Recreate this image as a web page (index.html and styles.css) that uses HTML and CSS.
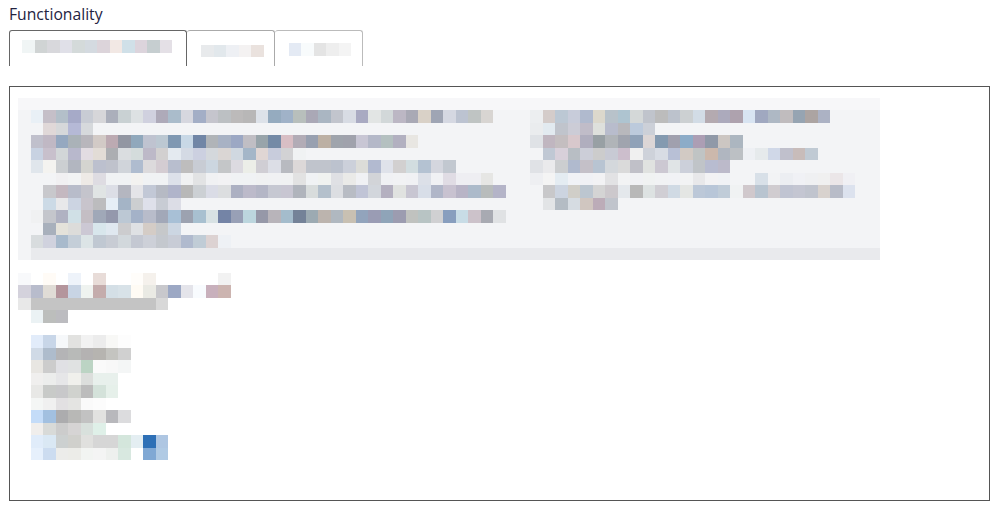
FILE: index.html
```html
<!DOCTYPE html>
<html lang="en">
<head>
<meta charset="utf-8">
<title>Functionality</title>
<link rel="stylesheet" href="styles.css">
</head>
<body>
<main class="page">
  <div class="field-label">Functionality</div>
  <nav class="tabs">
    <div class="tab tab-active"><div class="mosaic" data-m="tab1"></div></div>
    <div class="tab tab-second"><div class="mosaic" data-m="tab2"></div></div>
    <div class="tab tab-third"><div class="mosaic" data-m="tab3"></div></div>
  </nav>
  <section class="box">
    <div class="panel">
      <div class="panel-body">
        <div class="mosaic panel-left" data-m="left"></div>
        <div class="mosaic" data-m="right"></div>
      </div>
      <div class="panel-foot"></div>
    </div>
    <div class="mosaic lower" data-m="lower"></div>
  </section>
</main>
<script src="script.js"></script>
</body>
</html>
```
FILE: styles.css
```css
* { box-sizing: border-box; }
html, body { margin: 0; background: #fff; }
.page {
  width: 998px;
  height: 507px;
  padding-left: 9px;
  overflow: hidden;
  font-family: "Open Sans", "Noto Sans", sans-serif;
}
.field-label {
  height: 30px;
  padding-top: 3px;
  font-size: 15.7px;
  line-height: 22px;
  color: #23233f;
}
.tabs { display: flex; height: 36px; }
.tab {
  height: 36px;
  border: 1px solid #666;
  border-bottom: 0;
  border-radius: 3px 3px 0 0;
}
.tab-active { width: 178px; padding: 9px 0 0 12px; border-color: #666; }
.tab-second { width: 87.5px; padding: 13.5px 0 0 14px; border-color: #aaa; border-left: 0; }
.tab-third { width: 88px; padding: 12px 0 0 14px; border-color: #bbb; border-left: 0; }
.box {
  width: 981px;
  height: 415px;
  margin-top: 20px;
  padding: 11px 8px 0;
  border: 1px solid #555;
}
.panel { width: 862px; height: 162px; background: #f3f4f6; }
.panel-body { display: flex; height: 149.5px; padding: 12px 0 0 12.5px; background: linear-gradient(#f7f7f9 12px, #f3f4f6 12px); }
.panel-left { width: 499.5px; }
.panel-foot { height: 12.5px; margin-left: 12.5px; background: #e9eaed; }
.lower { margin-top: 12.5px; }
.mosaic { filter: blur(0.35px); }
.row { display: flex; height: 12.5px; }
.cell { flex: none; width: 12.5px; height: 12.5px; }
```
FILE: script.js
```js
const DATA = {
  tab1: ["f0f5f5 d0d4d4 d8d8dc e0e0e8 d4dada d4dae0 dcd4da f2e8e4 d0e0e8 dcd4dc c6ced0 e4e0e6"],
  tab2: ["e8eaec e2e8ec eef0f4 f4f2f2 eae2de"],
  tab3: ["e4eaf4 f8fbfc e4e4e4 eeeeee f4f4f4"],
  left: [
    "e9f0f6 c5bfc8 b3bfc9 a6aac8 c8ccd4 d6d6d9 abafbb c9d1d3 dde1e3 d0d1df aeaab9 aabccb d6d7df a3aec6 c5c5cd bcc0c3 bcbaba b8b7b7 dde2e9 95abbf a0b2c8 b8bfbc aaa8b6 aab6c2 c2c5cd d8dce4 a9aac2 e2e5e4 d2d8d9 bcb7c4 a9a9b5 d9d1c7 9fa5b4 d5d8e2 bcc3d1 bfc4c3 d8d5d2",
    "- e0d8d8 d6d8da b5b9d6 d6d9dc",
    "c0c0cc c0b8c4 95a8c0 aab2b8 b8b6bc d2cac6 bcaab2 9296a2 90a8bc bfc3d0 bcc8d2 7f98b2 c8d8e6 7186a6 b0b4b8 a8b2c4 9ca8c4 c0bec4 98a4aa 748aa6 d8bec4 b2acb6 98a0b0 bcb0a4 9fa4ac a0a2ac c8c6d4 b4b8c8 b4c0c0 b2b0c0 e8e6e2",
    "c8d2e2 c8c0cc d2d6d8 b8b8cc e2dce2 e2dcd6 acaeb2 dadde0 d4dcdc bdb9c8 d2d0d0 e4eaf0 d4dae4 ccd0e0 d4d8dc dad6d4 d0d8e0 a4b6c8 e0d6d4 c8ccdc d2d2d4 f0f2f3",
    "e0e6ec f4f3f0 cccfd2 b2b6c0 d4d4d0 bcc0ce bfc2cc d0d4da afbccf dcdadc d4ccd2 b8bece bebdbd c8ccd4 ccd6e0 c4c6c8 dcdae0 eceee8 d0ced4 dcdee6 b8bac0 dcd8d8 c0c4cc c0c4cc bcc2ce ccd0da dcdcd8 b2bad0 dfe2ea d2d0d0 d2dde0 b4c2d2 d4d6de c2c8d0",
    "- - f1f0f2 f2f3f4 eeeae6 dedce2 f0f2f4 f0f2f4 f3f2f0 f0f2f4 f0f2f4 dde1ea f0f1f2 e2e3e4 f0f1f3 f2f2f4 f0f2f4 f0f2f4 f0f1f2 f0f1f3 f0f1f2 e2e2e2 f0f2f4 f0f2f0 dfe0e4 eaeae8 f0f1f4 d2d4d8 f0f1f4 f1f2f4 f0f1f4 dce0e8 f0f1f4 e0dce4 eeeef2 eeeef2 e6e6e4",
    "- c8c8cc c4b8c0 b8bcca c4c4cc e0e4e4 dcdee6 b4b6c0 e4e4e8 c2c8d6 b6bac4 b0b4ca b8b8b8 ccd0d4 dadce6 dcdee0 acb0c2 bcbaca b4b6c6 c6c8d2 c8c6d2 b0b4bc d8dcdc b4c0cc dcdee2 b8bcc4 c0c4d6 d2d6dc b4b0c0 e0e2e0 c8c6d2 d8dee8 b0b6c8 c8c2d0 b8b4c6 acbaca b8bcbc b4b4c8",
    "- ccdae6 e8e8ea ccd4e2 c8c4cc bcbcbe e6eef6 a4b4c6 ccced0 dee0ea c8ccd4 dcdde6",
    "f0f1f2 c4c6cc b0b2c2 d0e0e6 c4bec4 a0a8b8 9498ac bcc8d4 a4b2c8 b8bcca a2a8b8 a8c0d6 9ca2b0 a8c0d0 d8e2e4 7484a6 98a0b6 bcd6de 9698a8 b8b4ba a4bccc 748298 9caab2 bcb4ae b0b8c0 c8c0b2 92a4bc 9a9cb4 8fa4b8 9c9cb0 c0c2bf b8c4c4 d0d0d2 889ebe c8dce6 ccc2ca a8aab2 e0e2e4",
    "- a8b0bc e4e2da dcdcda ccc8d4 d8e6ec e0e8f0 ccccce dfe1e4 d4ccc6 c6c8ca ccd6e2",
    "d8dcde d0d2de a8bacc c4ced8 dce4e6 c0c8d2 c8ccd4 d2d8dc c4c8d2 cdd0d8 c4c8ce c8ccd6 b0bace c0ccd6 dcd2d2 eef1f5"
  ],
  right: [
    "eceef0 d4ccca bcc8d4 c8ccda b0bace dcd8cc b8c2ca aec4d0 d4d8d8 c0c4cc bcbcbc bcc2cc ccd0d2 d2dce6 b4aab0 acaabc aea2ae d8e4f2 a0a8c0 aeb8c4 c0bcbe 96a4b2 aca4a2 acb2c4",
    "eaecee e2eaf0 c0c4cc ccccd6 c0bcc8 dee0dc b8bccc b8b8bc bccadc ccd0d8",
    "dfe2e6 c0b6c0 c4bec0 d8c8cc b0aebe 98a0a4 b0b4b8 a0a4ae 90a2b8 dcd6d6 849ab0 a0a0ae 8cacc8 ac9eb4 9099a8 ccc6c2 acb6c0",
    "- c0c8d4 d8d0da b8bec4 ccced8 cccccc c8cad4 ccbecc f0f0f0 ced2da d8dce4 b8c0d6 d2cac4 c0c4c4 ccb8ac b0b6c0 bcc0c4 eef0f4 e6eaec d0d8e8 c0c0cc c8bcba c0cad4",
    "e0e2e6 eaeaec ccced0 b0bace c4c0c8 b8c4d2 d4d8dc dadada c0c0c8 e0e2e0 ccc8d2 e0e4e6 ccd0da c0c4c8 b8bcd0 bcbaca",
    "eeeff2 f4f4f4 e4ecf2 f0f2f6 f0f1f5 f2f2f4 e2e2e4 f2f3f4 f0f1f4 f0f2f2 f1f2f4 f1f2f5 f2f3f4 e8e8ea f2f2f4 f0f2f5 - - d8e0e8 f2f3f5 eceef2 f0f1f5 eff0f2 f0f0f0 ebe6e8 f0f0f4",
    "- c8c8ca ccd4e0 d0cec8 bcc6d0 d4d4d4 ccc8cc e4e8ec b8b8b8 dde2e2 d0ced4 d0dae4 e4e6e4 bcc8d8 b8c6d8 c0ccd8 f0f2f3 d0c8cc b8c4d0 d0ccd0 c0c4d2 c4c6d2 c0c4ce d8d2ce b8bcc8 dce2ee",
    "- e2e4e6 b4bcc4 d6dce2 d0c6c0 bcacb8 c0c4cc"
  ],
  lower: [
    "f8f9fb - fffbf6 - eef3fa - e8dcd8 - - fffdfa f5f1ec - - - - - f2f2f2",
    "d4d2dc b8bccc e0dcd6 b4959c c8d4e4 eff3f0 c4acac d4dfe6 d8e2e8 fffbf4 eaeae4 c8c8cc 9ca8c4 e4e4ea f8fbfe c8b0bc ccb4b0",
    "e8e8e8 c4c4c4 c4c4c4 c4c4c4 c4c4c4 c4c4c4 c4c4c4 c4c4c4 c4c4c4 c4c4c4 c4c4c4 d8d8d8",
    "- ebf2f4 bcbebc bcbcc0",
    "-",
    "- e2ecfa c8d6e8 f6f8fa e2e2e0 f2f2f2 ececec f8f8f6 fdfdfd",
    "- d0dae6 aebccc b4b4b6 b8bab8 b4b2b2 b6b4b0 c4c4c0 d0d0d0",
    "- e8e6e2 cccccc e0e0e4 e0e2e2 bcd4c4 fafafa f8f8f8 f4f6f6",
    "- f0efee ecedec e6e6e8 f0f0ec dcdedc e8f0ec e8f0ec",
    "- e8e8e6 c8cac8 c8c8ca d0d2ce bcbcbc d4e2da e6f0ea",
    "- f4f6f5 f0f0f0 e2e0e2 e4e4e2 fafafa fcfcfc",
    "- c4dcf8 a2c0e0 acacae b8b8b6 c2c2c2 e2e2e0 b8b8bc dcdcde",
    "- f0eeec d8dad8 cccccc d6d4d4 d8e0dc dff0e8",
    "- e0ecfa dae8f4 ccd0d0 d0d0cc e0e0de d6d6d6 d6d6d6 d4e6dc e4eef2 2e70b6 aec6e2",
    "- e6f0fc ccdcf0 ececea ecece8 f2f4f2 f4f4f4 eef0ee d8e8e0 - 80a8d4 b0cae4"
  ]
};

document.querySelectorAll("[data-m]").forEach((host) => {
  DATA[host.dataset.m].forEach((line) => {
    const row = document.createElement("div");
    row.className = "row";
    line.split(" ").forEach((hex) => {
      const cell = document.createElement("span");
      cell.className = "cell";
      if (hex !== "-") cell.style.backgroundColor = "#" + hex;
      row.appendChild(cell);
    });
    host.appendChild(row);
  });
});
```
